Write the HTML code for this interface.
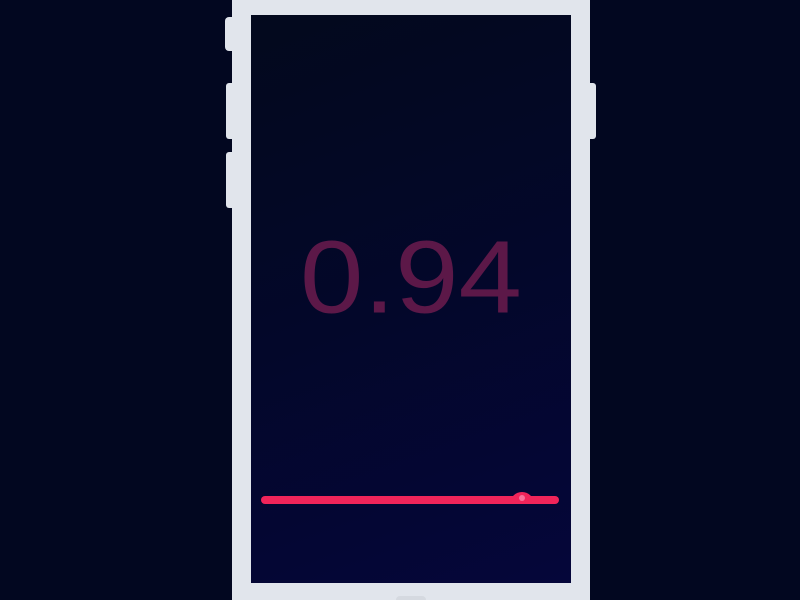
<!DOCTYPE html>
<html><head><meta charset="utf-8"><style>
html,body{margin:0;padding:0;width:800px;height:600px;overflow:hidden;background:#020720;position:relative;}
.phone{position:absolute;left:232px;top:-40px;width:358px;height:640px;background:#e1e5ec;border-radius:40px 40px 0 0;}
.btn{position:absolute;background:#e1e5ec;}
.screen{position:absolute;left:251px;top:15px;width:320px;height:568px;background:linear-gradient(160deg,#03091d 0%,#03072a 50%,#05063a 100%);overflow:hidden;}
.num{position:absolute;left:0;width:320px;top:205px;text-align:center;font-family:"Liberation Sans",sans-serif;font-size:114px;line-height:130px;color:#5c1848;transform:scaleY(0.9);transform-origin:50% 0;}
.bar{position:absolute;left:10px;top:481px;width:298px;height:8px;border-radius:4px;background:#f0245a;}
.bump{position:absolute;left:259px;top:477px;width:24px;height:12px;border-radius:12px 12px 0 0;background:#f0245a;}
.dot{position:absolute;left:268px;top:480px;width:6px;height:6px;border-radius:3px;background:#f8709a;}
.home{position:absolute;left:396px;top:596px;width:30px;height:4px;border-radius:15px 15px 0 0;background:#d5d9e0;}
</style></head><body>
<div class="btn" style="left:225px;top:17px;width:8px;height:34px;border-radius:4px 0 0 4px"></div>
<div class="btn" style="left:226px;top:83px;width:7px;height:56px;border-radius:3px 0 0 3px"></div>
<div class="btn" style="left:226px;top:152px;width:7px;height:56px;border-radius:3px 0 0 3px"></div>
<div class="btn" style="left:589px;top:83px;width:7px;height:56px;border-radius:0 3px 3px 0"></div>
<div class="phone"></div>
<div class="screen">
<div class="num">0.94</div>
<div class="bar"></div><div class="bump"></div><div class="dot"></div>
</div>
<div class="home"></div>
</body></html>
